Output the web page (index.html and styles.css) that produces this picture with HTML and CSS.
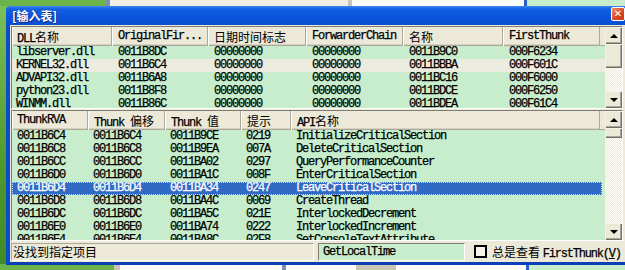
FILE: index.html
```html
<!DOCTYPE html>
<html lang="zh-CN">
<head>
    <meta charset="UTF-8">
    <title>输入表</title>
    <link rel="stylesheet" href="styles.css">
</head>
<body>
    <div class="desktop">
        <div class="bg-strip bg-top">
            <span class="bg-green" style="width:106px"></span>
            <span class="bg-line" style="width:4px"></span>
            <span class="bg-grey" style="width:238px"></span>
            <span class="bg-sep" style="width:4px"></span>
            <span class="bg-white" style="width:172px"></span>
            <span class="bg-blue" style="width:3px"></span>
            <span class="bg-list"></span>
        </div>
        <div class="bg-strip bg-bottom">
            <span class="bg-green" style="width:114px"></span>
            <span class="bg-sep" style="width:6px"></span>
            <span class="bg-white" style="width:162px"></span>
            <span class="bg-line" style="width:4px"></span>
            <span class="bg-white" style="width:70px"></span>
            <span class="bg-sep" style="width:40px"></span>
            <span class="bg-white" style="width:130px"></span>
            <span class="bg-blue" style="width:3px"></span>
            <span class="bg-list"></span>
        </div>

        <div class="window">
            <div class="titlebar">
                <span class="title">[输入表]</span>
                <span class="close">✕</span>
            </div>
            <div class="frame">
                <!-- DLL list -->
                <div class="listbox top-list">
                    <div class="list-main">
                        <div class="header top-cols">
                            <div class="hcell"><span class="mono">DLL</span>名称</div>
                            <div class="hcell mono">OriginalFir...</div>
                            <div class="hcell">日期时间标志</div>
                            <div class="hcell mono">ForwarderChain</div>
                            <div class="hcell">名称</div>
                            <div class="hcell mono">FirstThunk</div>
                            <div class="hcell hfill"></div>
                        </div>
                        <div class="row top-cols mono"><span>libserver.dll</span><span>0011B8DC</span><span>00000000</span><span>00000000</span><span>0011B9C0</span><span>000F6234</span></div>
                        <div class="row top-cols mono inactive"><span>KERNEL32.dll</span><span>0011B6C4</span><span>00000000</span><span>00000000</span><span>0011BBBA</span><span>000F601C</span></div>
                        <div class="row top-cols mono"><span>ADVAPI32.dll</span><span>0011B6A8</span><span>00000000</span><span>00000000</span><span>0011BC16</span><span>000F6000</span></div>
                        <div class="row top-cols mono"><span>python23.dll</span><span>0011B8F8</span><span>00000000</span><span>00000000</span><span>0011BDCE</span><span>000F6250</span></div>
                        <div class="row top-cols mono"><span>WINMM.dll</span><span>0011B86C</span><span>00000000</span><span>00000000</span><span>0011BDEA</span><span>000F61C4</span></div>
                    </div>
                    <div class="vscroll">
                        <div class="sbtn"><i class="arrow-up"></i></div>
                        <div class="thumb" style="height:24px"></div>
                        <div class="track"></div>
                        <div class="sbtn"><i class="arrow-down"></i></div>
                    </div>
                </div>

                <!-- thunk list -->
                <div class="listbox bottom-list">
                    <div class="list-main">
                        <div class="header bot-cols">
                            <div class="hcell mono">ThunkRVA</div>
                            <div class="hcell"><span class="mono">Thunk </span>偏移</div>
                            <div class="hcell"><span class="mono">Thunk </span>值</div>
                            <div class="hcell">提示</div>
                            <div class="hcell"><span class="mono">API</span>名称</div>
                            <div class="hcell hfill"></div>
                        </div>
                        <div class="row bot-cols mono"><span>0011B6C4</span><span>0011B6C4</span><span>0011B9CE</span><span>0219</span><span>InitializeCriticalSection</span></div>
                        <div class="row bot-cols mono"><span>0011B6C8</span><span>0011B6C8</span><span>0011B9EA</span><span>007A</span><span>DeleteCriticalSection</span></div>
                        <div class="row bot-cols mono"><span>0011B6CC</span><span>0011B6CC</span><span>0011BA02</span><span>0297</span><span>QueryPerformanceCounter</span></div>
                        <div class="row bot-cols mono"><span>0011B6D0</span><span>0011B6D0</span><span>0011BA1C</span><span>008F</span><span>EnterCriticalSection</span></div>
                        <div class="row bot-cols mono selected"><span>0011B6D4</span><span>0011B6D4</span><span>0011BA34</span><span>0247</span><span>LeaveCriticalSection</span></div>
                        <div class="row bot-cols mono"><span>0011B6D8</span><span>0011B6D8</span><span>0011BA4C</span><span>0069</span><span>CreateThread</span></div>
                        <div class="row bot-cols mono"><span>0011B6DC</span><span>0011B6DC</span><span>0011BA5C</span><span>021E</span><span>InterlockedDecrement</span></div>
                        <div class="row bot-cols mono"><span>0011B6E0</span><span>0011B6E0</span><span>0011BA74</span><span>0222</span><span>InterlockedIncrement</span></div>
                        <div class="row bot-cols mono"><span>0011B6E4</span><span>0011B6E4</span><span>0011BA8C</span><span>02F8</span><span>SetConsoleTextAttribute</span></div>
                    </div>
                    <div class="vscroll">
                        <div class="sbtn"><i class="arrow-up"></i></div>
                        <div class="thumb" style="height:10px"></div>
                        <div class="track"></div>
                        <div class="sbtn"><i class="arrow-down"></i></div>
                    </div>
                </div>

                <div class="statusbar">
                    <div class="status-panel">没找到指定项目</div>
                    <div class="status-field mono">GetLocalTime</div>
                    <label class="check">
                        <span class="box"></span>
                        <span>总是查看 <span class="mono">FirstThunk(<u>V</u>)</span></span>
                    </label>
                </div>
            </div>
        </div>
    </div>
</body>
</html>
```

FILE: styles.css
```css
body {
    margin: 0;
    padding: 0;
    background: #ece9d8;
    font-family: "Noto Sans CJK SC", "DejaVu Sans", sans-serif;
    font-size: 12px;
    color: #000;
}
.desktop {
    position: relative;
    width: 625px;
    height: 270px;
    overflow: hidden;
    background: linear-gradient(#7cc05a, #4f9a2e 60%, #3f8a24);
}
.bg-strip {
    position: absolute;
    left: 0;
    right: 0;
    display: flex;
}
.bg-top {
    top: 0;
    height: 6px;
}
.bg-bottom {
    bottom: 0;
    height: 6px;
}
.bg-green {
    background: #6cb44a;
}
.bg-line {
    background: #7d8fb8;
}
.bg-grey {
    background: #f1efe6;
}
.bg-sep {
    background: #c9c6b6;
}
.bg-white {
    background: #fbfbfb;
}
.bg-blue {
    background: #2d5fc8;
}
.bg-list {
    flex: 1;
    background: #c7edcc;
}

.mono {
    font-family: "Liberation Mono", "DejaVu Sans Mono", monospace;
    letter-spacing: -1.2px;
    -webkit-text-stroke: 0.25px #000;
}

/* window */
.window {
    position: absolute;
    left: 6px;
    top: 6px;
    width: 624px;
    height: 259px;
    display: flex;
    flex-direction: column;
}
.titlebar {
    position: relative;
    height: 19px;
    padding-left: 6px;
    display: flex;
    align-items: center;
    background: linear-gradient(#3d86f2 0, #165fe3 3px, #0a55dc 55%, #0a4fd0 100%);
    border-radius: 4px 0 0 0;
}
.title {
    color: #fff;
    font-weight: bold;
    font-size: 12px;
    text-shadow: 1px 1px 0 #0a2d8a;
}
.close {
    position: absolute;
    left: 605px;
    top: 1px;
    width: 12px;
    height: 12px;
    border: 1px solid #fff;
    border-radius: 2px;
    background: linear-gradient(135deg, #f08a6c, #d9461e 60%, #c23b15);
    color: #fff;
    font-family: "DejaVu Sans", sans-serif;
    font-size: 10px;
    font-weight: bold;
    line-height: 12px;
    text-align: center;
}
.frame {
    flex: 1;
    display: flex;
    flex-direction: column;
    background: #ece9d8;
    border-left: 4px solid #0b4bd2;
    border-bottom: 3px solid #0a3fb5;
    padding: 1px 0 0 1px;
}

/* list views */
.listbox {
    width: 610px;
    display: flex;
    border-top: 1px solid #7f7d70;
    border-left: 1px solid #7f7d70;
    border-bottom: 1px solid #fff;
    border-right: 1px solid #fff;
    background: #c7edcc;
    overflow: hidden;
}
.top-list {
    height: 81px;
}
.bottom-list {
    height: 129px;
    margin-top: 1px;
}
.list-main {
    flex: 1;
    overflow: hidden;
}
.header {
    display: grid;
    height: 19px;
    background: #ece9d8;
}
.top-cols {
    display: grid;
    grid-template-columns: 100px 96px 98px 97px 100px 97px 1fr;
}
.bot-cols {
    display: grid;
    grid-template-columns: 76px 77px 76px 50px 309px 1fr;
}
.hcell {
    padding-left: 6px;
    line-height: 19px;
    white-space: nowrap;
    overflow: hidden;
    background: #ece9d8;
    box-shadow: inset 1px 0 #fff, inset -1px 0 #aca899, inset 0 -1px #aca899, inset 0 -2px #d6d2c2;
}
.hfill {
    box-shadow: inset 0 -1px #aca899;
}
.bot-cols .hcell:first-child,
.top-cols .hcell:first-child {
    padding-left: 5px;
}
.row {
    height: 13px;
    line-height: 13px;
    white-space: nowrap;
}
.row span {
    padding-left: 5px;
    overflow: hidden;
}
.top-cols.row span {
    padding-left: 6px;
}
.top-cols.row span:first-child {
    padding-left: 4px;
}
.row span:last-child {
    overflow: visible;
}
.inactive {
    background: #ecebdf;
}
.selected {
    background: #316ac5;
    color: #fff;
    outline: 1px dotted #c9d6ef;
    outline-offset: -1px;
    margin-right: 3px;
}
.selected.mono {
    -webkit-text-stroke: 0.25px #fff;
}

/* scrollbars */
.vscroll {
    width: 17px;
    display: flex;
    flex-direction: column;
    background: #ece9d8;
}
.sbtn,
.thumb {
    flex: none;
    background: #ece9d8;
    box-shadow: inset 1px 1px #f4f2e8, inset -1px -1px #716f64, inset -2px -2px #aca899;
}
.sbtn {
    height: 17px;
    display: flex;
    align-items: center;
    justify-content: center;
}
.track {
    flex: 1;
    background: repeating-conic-gradient(#fff 0 25%, #ece9d8 0 50%) 0 0 / 2px 2px;
}
.arrow-up,
.arrow-down {
    width: 0;
    height: 0;
    border-left: 4px solid transparent;
    border-right: 4px solid transparent;
}
.arrow-up {
    border-bottom: 4px solid #000;
}
.arrow-down {
    border-top: 4px solid #000;
}

/* status bar */
.statusbar {
    display: flex;
    align-items: center;
    margin-top: 1px;
    height: 19px;
    gap: 4px;
}
.status-panel {
    width: 300px;
    height: 16px;
    line-height: 16px;
    padding-left: 1px;
    border-top: 1px solid #aca899;
    border-left: 1px solid #aca899;
    border-bottom: 1px solid #fff;
    border-right: 1px solid #fff;
}
.status-field {
    width: 141px;
    height: 16px;
    line-height: 17px;
    padding-left: 4px;
    background: #c7edcc;
    border-top: 1px solid #7f7d70;
    border-left: 1px solid #7f7d70;
    border-bottom: 1px solid #fff;
    border-right: 1px solid #fff;
}
.check {
    display: flex;
    align-items: center;
    gap: 5px;
    margin-left: 5px;
    white-space: nowrap;
}
.box {
    width: 9px;
    height: 9px;
    border: 2px solid #000;
    background: #f5f4ea;
}
```
